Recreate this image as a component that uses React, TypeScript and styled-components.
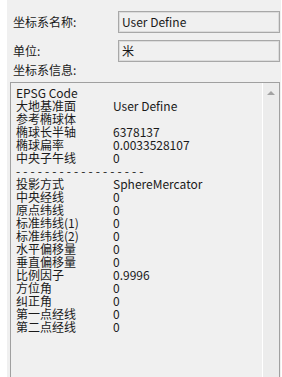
import React from "react";
import styled, { createGlobalStyle } from "styled-components";

const Global = createGlobalStyle`
  html, body { margin: 0; padding: 0; background: #ffffff; overflow: hidden; }
  body { font-family: "Noto Sans CJK SC", "Open Sans", sans-serif; }
`;

const Panel = styled.div`
  margin-left: 7px;
  width: 274px;
  height: 377px;
  background: #f0f0f0;
  padding: 11px 1px 0 3px;
  box-sizing: border-box;
  font-size: 12px;
  color: #1a1a1a;
  overflow: hidden;
`;

const FieldRow = styled.div`
  display: flex;
  align-items: center;
  height: 22px;
  margin-bottom: 7px;
`;

const FieldLabel = styled.div`
  width: 108px;
  padding-left: 3px;
  box-sizing: border-box;
  line-height: 16px;
`;

const FieldBox = styled.div`
  flex: 1;
  height: 22px;
  box-sizing: border-box;
  border: 1px solid #a8a8a8;
  box-shadow: inset 1px 1px 0 #dcdcdc, inset -1px -1px 0 #dcdcdc;
  background: #f0f0f0;
  padding-left: 3px;
  display: flex;
  align-items: center;
  line-height: 16px;
`;

const SectionLabel = styled.div`
  margin-top: -7px;
  padding-left: 3px;
  line-height: 16px;
  margin-bottom: 4px;
`;

const ListFrame = styled.div`
  height: 320px;
  box-sizing: border-box;
  border: 1px solid #a0a0a0;
  display: flex;
  background: #f0f0f0;
`;

const ListBody = styled.div`
  flex: 1;
  padding: 3px 0 0 5px;
`;

const InfoRow = styled.div`
  display: flex;
  height: 13px;
  line-height: 13px;
  white-space: nowrap;
`;

const InfoKey = styled.span`
  width: 97px;
  flex: none;
`;

const InfoValue = styled.span``;

const Divider = styled.div`
  height: 13px;
  line-height: 13px;
  letter-spacing: 0.2px;
  white-space: nowrap;
`;

const ScrollTrack = styled.div`
  width: 17px;
  flex: none;
  border-left: 1px solid #ffffff;
  background: #ececec;
  display: flex;
  justify-content: center;
  padding-top: 8px;
  box-sizing: border-box;
`;

const ArrowUp = styled.div`
  width: 0;
  height: 0;
  border-left: 4px solid transparent;
  border-right: 4px solid transparent;
  border-bottom: 4px solid #a3a3a3;
`;

const rows: Array<[string, string] | "divider"> = [
  ["EPSG Code", ""],
  ["大地基准面", "User Define"],
  ["参考椭球体", ""],
  ["椭球长半轴", "6378137"],
  ["椭球扁率", "0.0033528107"],
  ["中央子午线", "0"],
  "divider",
  ["投影方式", "SphereMercator"],
  ["中央经线", "0"],
  ["原点纬线", "0"],
  ["标准纬线(1)", "0"],
  ["标准纬线(2)", "0"],
  ["水平偏移量", "0"],
  ["垂直偏移量", "0"],
  ["比例因子", "0.9996"],
  ["方位角", "0"],
  ["纠正角", "0"],
  ["第一点经线", "0"],
  ["第二点经线", "0"],
];

export default function App() {
  return (
    <>
      <Global />
      <Panel>
        <FieldRow>
          <FieldLabel>坐标系名称:</FieldLabel>
          <FieldBox>User Define</FieldBox>
        </FieldRow>
        <FieldRow>
          <FieldLabel>单位:</FieldLabel>
          <FieldBox>米</FieldBox>
        </FieldRow>
        <SectionLabel>坐标系信息:</SectionLabel>
        <ListFrame>
          <ListBody>
            {rows.map((r, i) =>
              r === "divider" ? (
                <Divider key={i}>{"- ".repeat(18)}</Divider>
              ) : (
                <InfoRow key={i}>
                  <InfoKey>{r[0]}</InfoKey>
                  <InfoValue>{r[1]}</InfoValue>
                </InfoRow>
              )
            )}
          </ListBody>
          <ScrollTrack>
            <ArrowUp />
          </ScrollTrack>
        </ListFrame>
      </Panel>
    </>
  );
}
